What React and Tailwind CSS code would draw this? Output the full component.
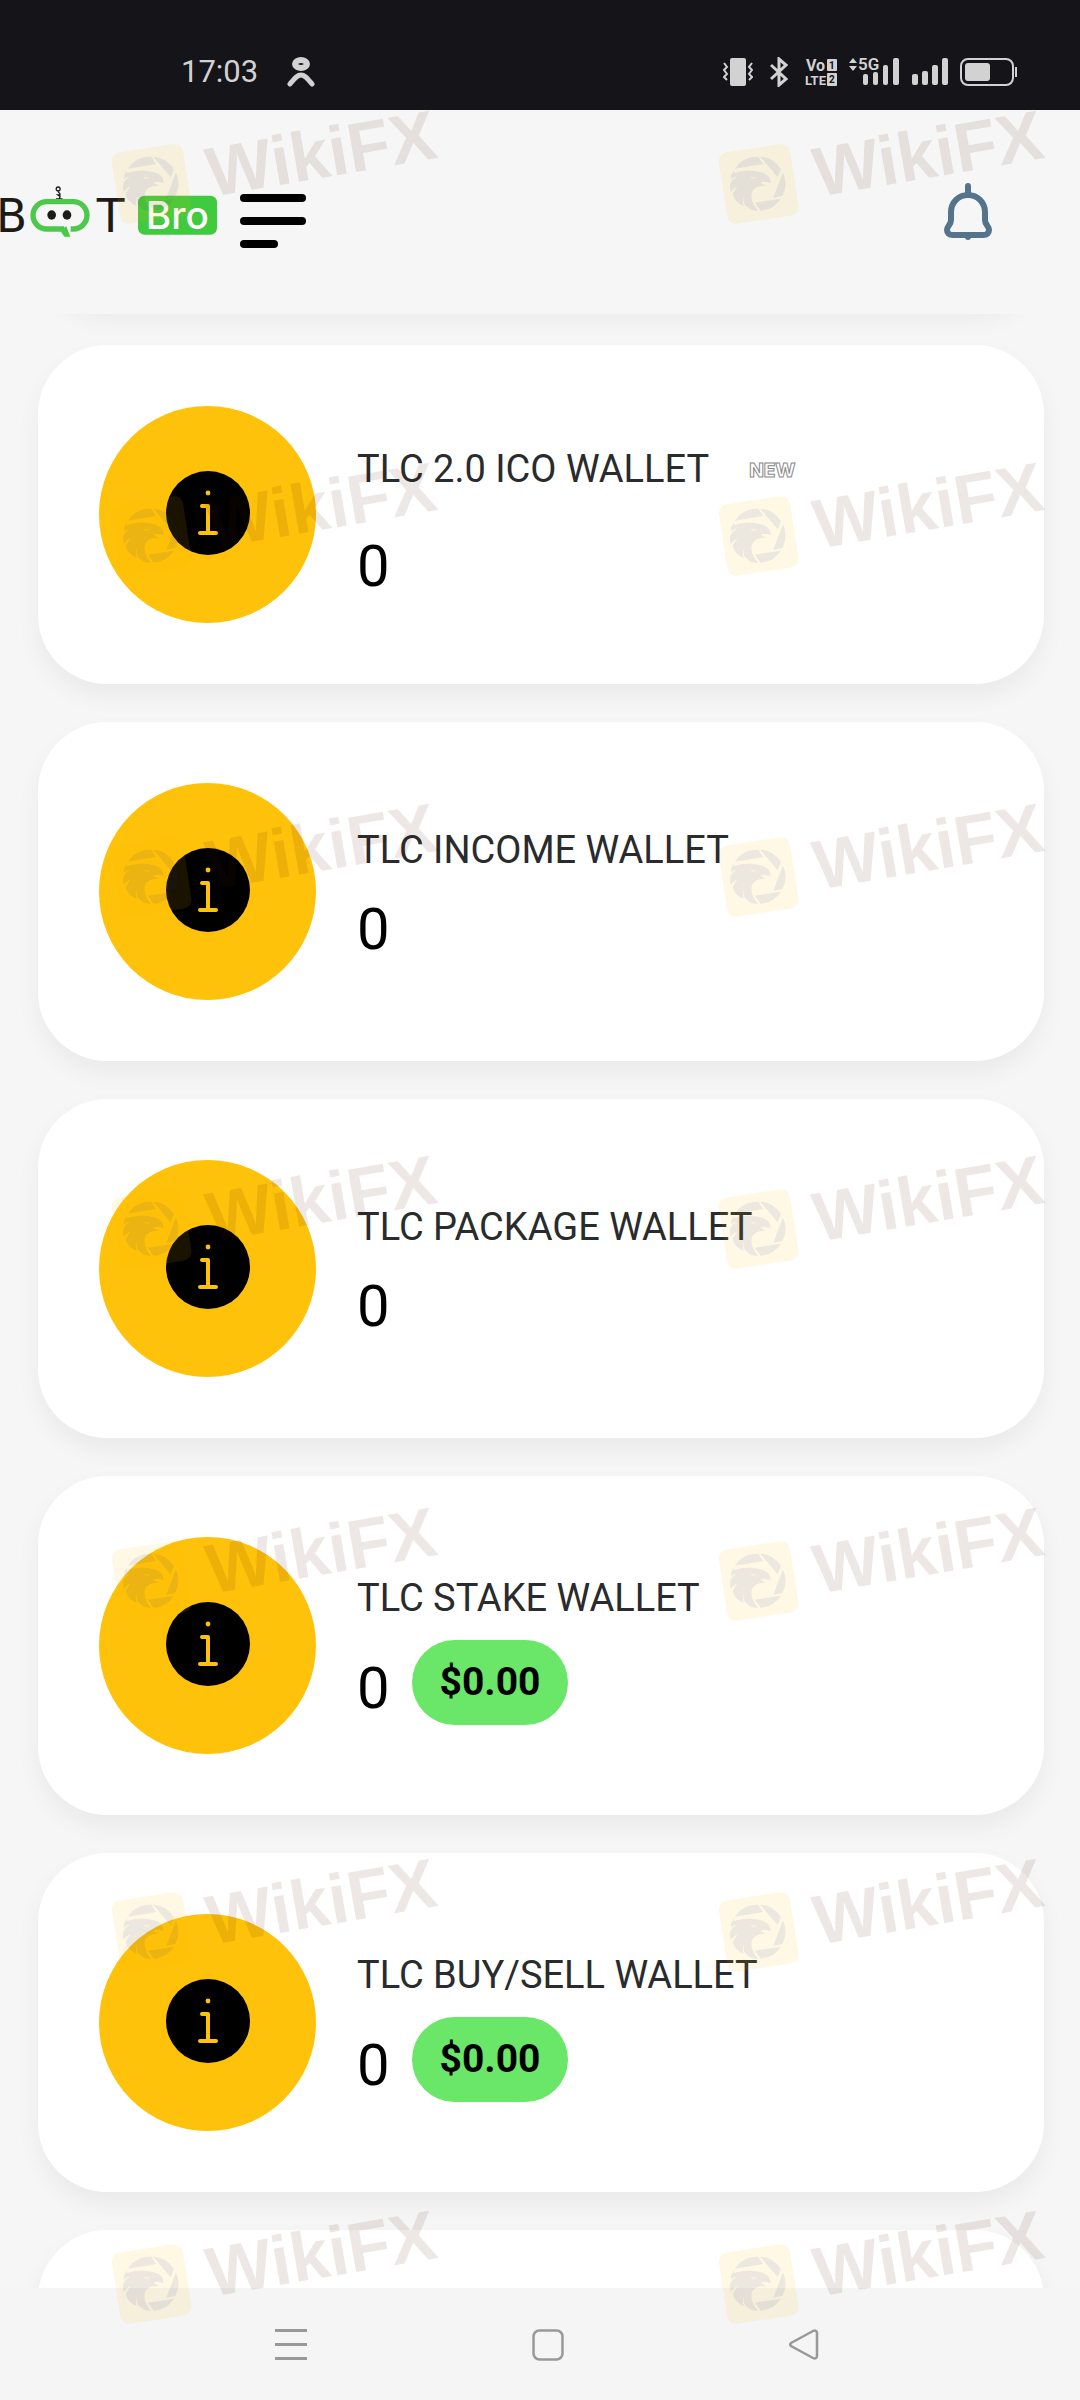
const WALLETS = [
    { name: 'TLC 2.0 ICO WALLET', balance: 0, isNew: true },
    { name: 'TLC INCOME WALLET', balance: 0 },
    { name: 'TLC PACKAGE WALLET', balance: 0 },
    { name: 'TLC STAKE WALLET', balance: 0, usd: '$0.00' },
    { name: 'TLC BUY/SELL WALLET', balance: 0, usd: '$0.00' },
];

const WATERMARK_ROWS = [110, 462, 803, 1155, 1507, 1858, 2210];

const CARD = 'h-[339px] shrink-0 rounded-[69px] bg-white shadow-[0_12px_24px_rgba(0,0,40,0.05)]';

function SignalBars({ className }) {
    return (
        <svg viewBox="0 0 36 29" className={className} fill="currentColor">
            <rect x="0" y="16" width="6" height="11" rx="2" />
            <rect x="10" y="13" width="6" height="14" rx="2" />
            <rect x="20" y="7" width="6" height="20" rx="2" />
            <rect x="30" y="0" width="6" height="27" rx="2" />
        </svg>
    );
}

function StatusBar() {
    return (
        <div className="flex h-[110px] shrink-0 items-center justify-between bg-[#151419] pt-[34px] pr-[62px] pl-[181px] font-['Roboto',sans-serif] text-[#d2d2d2]">
            <div className="flex items-center gap-[29px]">
                <span className="text-[31px] leading-10">17:03</span>
                <svg viewBox="0 0 28 30" className="h-[30px] w-7" fill="none" stroke="currentColor">
                    <ellipse cx="14" cy="7" rx="6" ry="4" strokeWidth="6" />
                    <path d="M3 27C8 21 10 18 14 18s6 3 11 9" strokeWidth="5" strokeLinecap="round" />
                </svg>
            </div>
            <div className="flex items-center">
                <svg viewBox="0 0 30 30" className="mr-[17px] h-[30px] w-[30px]" fill="none" stroke="currentColor" strokeWidth="2">
                    <rect x="7" y="1" width="16" height="28" rx="2" fill="currentColor" stroke="none" />
                    <path d="M1 6l3 4-3 3 3 4-3 3 3 3M29 6l-3 4 3 3-3 4 3 3-3 3" />
                </svg>
                <svg viewBox="0 0 18 30" className="mr-[18px] h-[30px] w-[18px]" fill="none" stroke="currentColor" strokeWidth="3">
                    <path d="M1 8l15 14-7 6V2l7 6L1 22" />
                </svg>
                <svg viewBox="0 0 32 30" className="mr-[10px] h-[30px] w-8 overflow-visible font-bold" fill="currentColor">
                    <text x="0" y="14" fontSize="16">Vo</text>
                    <text x="-1" y="28" fontSize="13">LTE</text>
                    <rect x="21" y="2" width="10" height="12" rx="1" />
                    <rect x="21" y="16" width="10" height="13" rx="1" />
                    <text x="23" y="12" fontSize="10" fill="#151419">1</text>
                    <text x="23" y="26" fontSize="10" fill="#151419">2</text>
                </svg>
                <svg viewBox="0 0 52 32" className="mr-3 h-8 w-[52px] overflow-visible" fill="currentColor">
                    <path d="M5 2l4 5H1zM5 15l4-5H1z" />
                    <text x="10" y="14" fontSize="17" fontWeight="600">5G</text>
                    <rect x="15" y="18" width="5" height="11" rx="2" />
                    <rect x="25" y="16" width="5" height="13" rx="2" />
                    <rect x="35" y="9" width="5" height="20" rx="2" />
                    <rect x="45" y="2" width="6" height="27" rx="2" />
                </svg>
                <SignalBars className="mr-3 h-[29px] w-9" />
                <svg viewBox="0 0 58 30" className="h-[30px] w-[58px]" fill="none" stroke="currentColor">
                    <rect x="1" y="2" width="52" height="26" rx="7" strokeWidth="2" />
                    <rect x="5" y="6" width="25" height="18" rx="3" fill="currentColor" stroke="none" />
                    <path d="M56 10v10" strokeWidth="2" />
                </svg>
            </div>
        </div>
    );
}

function Logo() {
    return (
        <svg viewBox="0 40 660 165" className="h-[55px] w-[220px] overflow-visible" role="img" aria-label="Bot Bro">
            <g fontFamily="DejaVu Sans, sans-serif" fontSize="136" fill="#1d1b17">
                <text x="-12" y="186">B</text>
                <text x="332" y="186" textAnchor="middle">T</text>
            </g>
            <path d="M174 64a6 6 0 1 1 1 0c0 8 6 4 5 12l-6 0 6 4-2 8M168 88h20" fill="none" stroke="#1d1b17" strokeWidth="4" />
            <path d="M192 178H140a41 41 0 0 1 0-82h80a41 41 0 0 1 0 82h-8" fill="none" stroke="#4cc94a" strokeWidth="16" />
            <path d="M180 182l13 19h18l-12-31z" fill="#4cc94a" />
            <ellipse cx="155" cy="136" rx="13" ry="14" fill="#1d1b17" />
            <ellipse cx="201" cy="136" rx="13" ry="14" fill="#1d1b17" />
            <rect x="414" y="78" width="237" height="117" rx="20" fill="#40ca3f" />
            <text x="532" y="178" textAnchor="middle" fontFamily="Inter, sans-serif" fontSize="116" fontWeight="500" fill="#fff">Bro</text>
        </svg>
    );
}

function Header() {
    return (
        <header className="z-10 flex h-[204px] shrink-0 items-start justify-between bg-[#f6f6f6] pt-[73px] pr-[87px]">
            <div className="flex items-start gap-5">
                <a href="#home"><Logo /></a>
                <button aria-label="Menu" className="mt-[11px] flex flex-col gap-[15px]">
                    <span className="h-2 w-[66px] rounded-full bg-black" />
                    <span className="h-2 w-[66px] rounded-full bg-black" />
                    <span className="h-2 w-[38px] rounded-full bg-black" />
                </button>
            </div>
            <button aria-label="Notifications">
                <svg viewBox="0 0 49 58" className="h-[58px] w-[49px]" fill="none" stroke="#55738a" strokeWidth="6" strokeLinecap="round">
                    <path d="M24 12C14 12 7 20 7 29v8c0 5-4 6-4 10 0 3 2 5 6 5h30c4 0 6-2 6-5 0-4-4-5-4-10v-8c0-9-7-17-17-17zM24 3v9M24 53v1" />
                </svg>
            </button>
        </header>
    );
}

function InfoIcon() {
    return (
        <svg viewBox="0 0 217 217" className="h-[217px] w-[217px] shrink-0" fill="none" stroke="#ffc20a" strokeWidth="4" strokeLinecap="round">
            <circle cx="108.5" cy="108.5" r="108.5" fill="#ffc20a" stroke="none" />
            <circle cx="109" cy="107" r="42" fill="#000" stroke="none" />
            <circle cx="109" cy="87" r="2.4" fill="#ffc20a" stroke="none" />
            <path d="M103 100h6v27M101 127h16" strokeLinejoin="round" />
        </svg>
    );
}

function WalletCard({ wallet }) {
    return (
        <li className={`${CARD} flex items-center gap-[41px] pl-[61px]`}>
            <InfoIcon />
            <div className="flex flex-col gap-[10px]">
                <div className={wallet.isNew ? 'flex h-[92px] items-center gap-10 pb-2' : 'flex items-center'}>
                    <h2 className="text-[38px] leading-[64px] text-[#292b2c]">{wallet.name}</h2>
                    {wallet.isNew && (
                        <span className="pt-1 font-['Inter',sans-serif] text-[19px] leading-6 font-extrabold text-white [-webkit-text-stroke:1px_#888]">NEW</span>
                    )}
                </div>
                <div className="flex items-end gap-[22px]">
                    <span className="text-[58px] leading-[74px] text-black">{wallet.balance}</span>
                    {wallet.usd && (
                        <span className="rounded-full bg-[#6ae668] px-7 text-[39px] leading-[85px] font-bold text-black">{wallet.usd}</span>
                    )}
                </div>
            </div>
        </li>
    );
}

function NavBar() {
    return (
        <nav className="flex h-28 shrink-0 items-start justify-center gap-[225px] bg-[#f5f5f5] pt-10 pl-4 text-[#999]">
            <button aria-label="Recent apps">
                <svg viewBox="0 0 32 34" className="h-[34px] w-8" stroke="currentColor" strokeWidth="3">
                    <path d="M0 2.5h32M0 16.5h32M0 30.5h32" />
                </svg>
            </button>
            <button aria-label="Home">
                <svg viewBox="0 0 32 34" className="h-[34px] w-8" fill="none" stroke="currentColor" strokeWidth="2.5">
                    <rect x="1.5" y="2.5" width="29" height="29" rx="6" />
                </svg>
            </button>
            <button aria-label="Back">
                <svg viewBox="0 0 32 34" className="h-[34px] w-8" fill="none" stroke="currentColor" strokeWidth="2.5">
                    <path d="M2 15l22-12c2-1 4 0 4 2v23c0 2-2 3-4 2L2 18c-1-1-1-2 0-3z" />
                </svg>
            </button>
        </nav>
    );
}

function Watermark() {
    return (
        <svg viewBox="6 0 984 348" className="h-[116px] w-[328px] overflow-visible">
            <rect x="20" y="114" width="216" height="216" rx="26" fill="rgb(250 190 0 / 0.1)" transform="rotate(-8.8 128 222)" />
            <g transform="translate(-23 53)" fill="rgb(20 35 150 / 0.08)">
                <path d="M80 123Q103 86 150 87l14 22zM156 87Q195 88 218 125l-10 24zM224 134Q240 172 222 205l-27 5zM218 213Q196 246 157 249l-17-24z" />
                <path d="M77 136Q120 122 157 134q30 6 30 33-14-8-31-2l17 11q-28-4-41 15-10 26 17 59-21 0-33-13-13-8-9-31-6 13-1 29-28-13-33-37l14-22q-16 9-19 18-5-13-2-26 6-14 19-20-12-1-18 8 0-14 10-28zM126 148q8 8 19 2z" fillRule="evenodd" />
            </g>
            <text x="306" y="260" fontFamily="Liberation Sans, Arial, sans-serif" fontSize="209" fontWeight="700" fill="rgb(75 15 0 / 0.1)" transform="rotate(-9.7 306 260)">WikiFX</text>
        </svg>
    );
}

export default function App() {
    return (
        <div className="relative flex h-screen flex-col overflow-hidden bg-[#f6f6f6] font-['Roboto',sans-serif]">
            <StatusBar />
            <Header />
            <main className="min-h-0 flex-1 overflow-hidden">
                {/* list is scrolled, so the first and last cards are cut off */}
                <ul className="-mt-[346px] flex flex-col gap-[38px] pr-9 pl-[38px]">
                    <li className={CARD} />
                    {WALLETS.map((wallet) => <WalletCard key={wallet.name} wallet={wallet} />)}
                    <li className={CARD} />
                </ul>
            </main>
            <NavBar />
            <div className="pointer-events-none absolute inset-0 z-20" aria-hidden="true">
                {WATERMARK_ROWS.map((top) => (
                    <div key={top} className="absolute right-[34px] left-[111px] flex justify-between" style={{ top }}>
                        <Watermark />
                        <Watermark />
                    </div>
                ))}
            </div>
        </div>
    );
}
